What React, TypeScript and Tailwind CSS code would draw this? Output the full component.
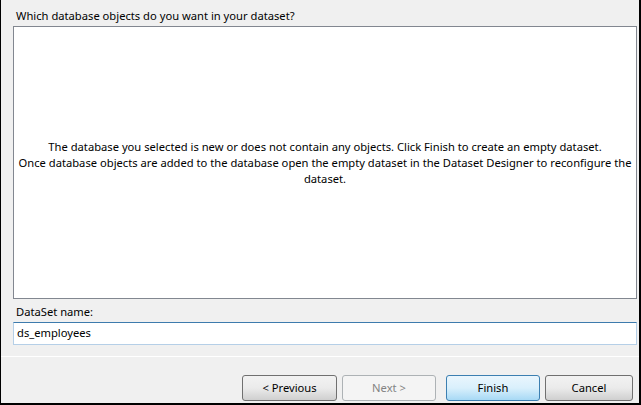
import React from 'react'

const font = { fontFamily: '"Noto Sans", "Open Sans", sans-serif' }

function WizButton({ label, kind }: { label: string; kind?: 'default' | 'disabled' | 'normal' }) {
  const base = 'h-[26px] rounded-[3px] border text-[11.2px] leading-none flex items-center justify-center'
  if (kind === 'disabled') {
    return (
      <button disabled className={`${base} border-[#adb2b5] bg-[#f4f4f4] text-[#838383] w-[94px]`}>
        {label}
      </button>
    )
  }
  if (kind === 'default') {
    return (
      <button className={`${base} border-[#3c7fb1] bg-gradient-to-b from-[#eaf6fd] via-[#d9f0fc] to-[#a7d9f5] text-black w-[94px]`}>
        {label}
      </button>
    )
  }
  return (
    <button className={`${base} border-[#707070] bg-gradient-to-b from-[#f2f2f2] via-[#ebebeb] to-[#cfcfcf] text-black ${label === 'Cancel' ? 'w-[88px]' : 'w-[95px]'}`}>
      {label}
    </button>
  )
}

export default function App() {
  return (
    <div
      className="w-[641px] h-[405px] bg-[#f0f0f0] border-l border-r-2 border-b-2 border-black flex flex-col text-[11.2px] text-black"
      style={font}
    >
      <div className="pl-[15px] pt-[8px] leading-[16px] mb-[2px]">
        Which database objects do you want in your dataset?
      </div>

      <div className="ml-[12px] mr-[2px] h-[273px] border border-[#828790] bg-white flex flex-col items-center justify-center text-center leading-[16px]">
        <div className="whitespace-nowrap">
          The database you selected is new or does not contain any objects. Click Finish to create an empty dataset.
        </div>
        <div className="whitespace-nowrap">
          Once database objects are added to the database open the empty dataset in the Dataset Designer to reconfigure the
        </div>
        <div className="whitespace-nowrap">dataset.</div>
      </div>

      <div className="pl-[15px] mt-[5px] leading-[16px]">DataSet name:</div>

      <div className="ml-[12px] mr-[2px] mt-[2px] h-[23px] bg-white border border-[#b5cfe7] border-t-[#3d7bad] flex items-center pl-[3px]">
        ds_employees
      </div>

      <div className="mt-[11px] h-px bg-white" />

      <div className="mt-[18px] flex justify-end pr-[6px]">
        <WizButton label="< Previous" />
        <div className="w-[5px]" />
        <WizButton label="Next >" kind="disabled" />
        <div className="w-[10px]" />
        <WizButton label="Finish" kind="default" />
        <div className="w-[5px]" />
        <WizButton label="Cancel" />
      </div>
    </div>
  )
}
